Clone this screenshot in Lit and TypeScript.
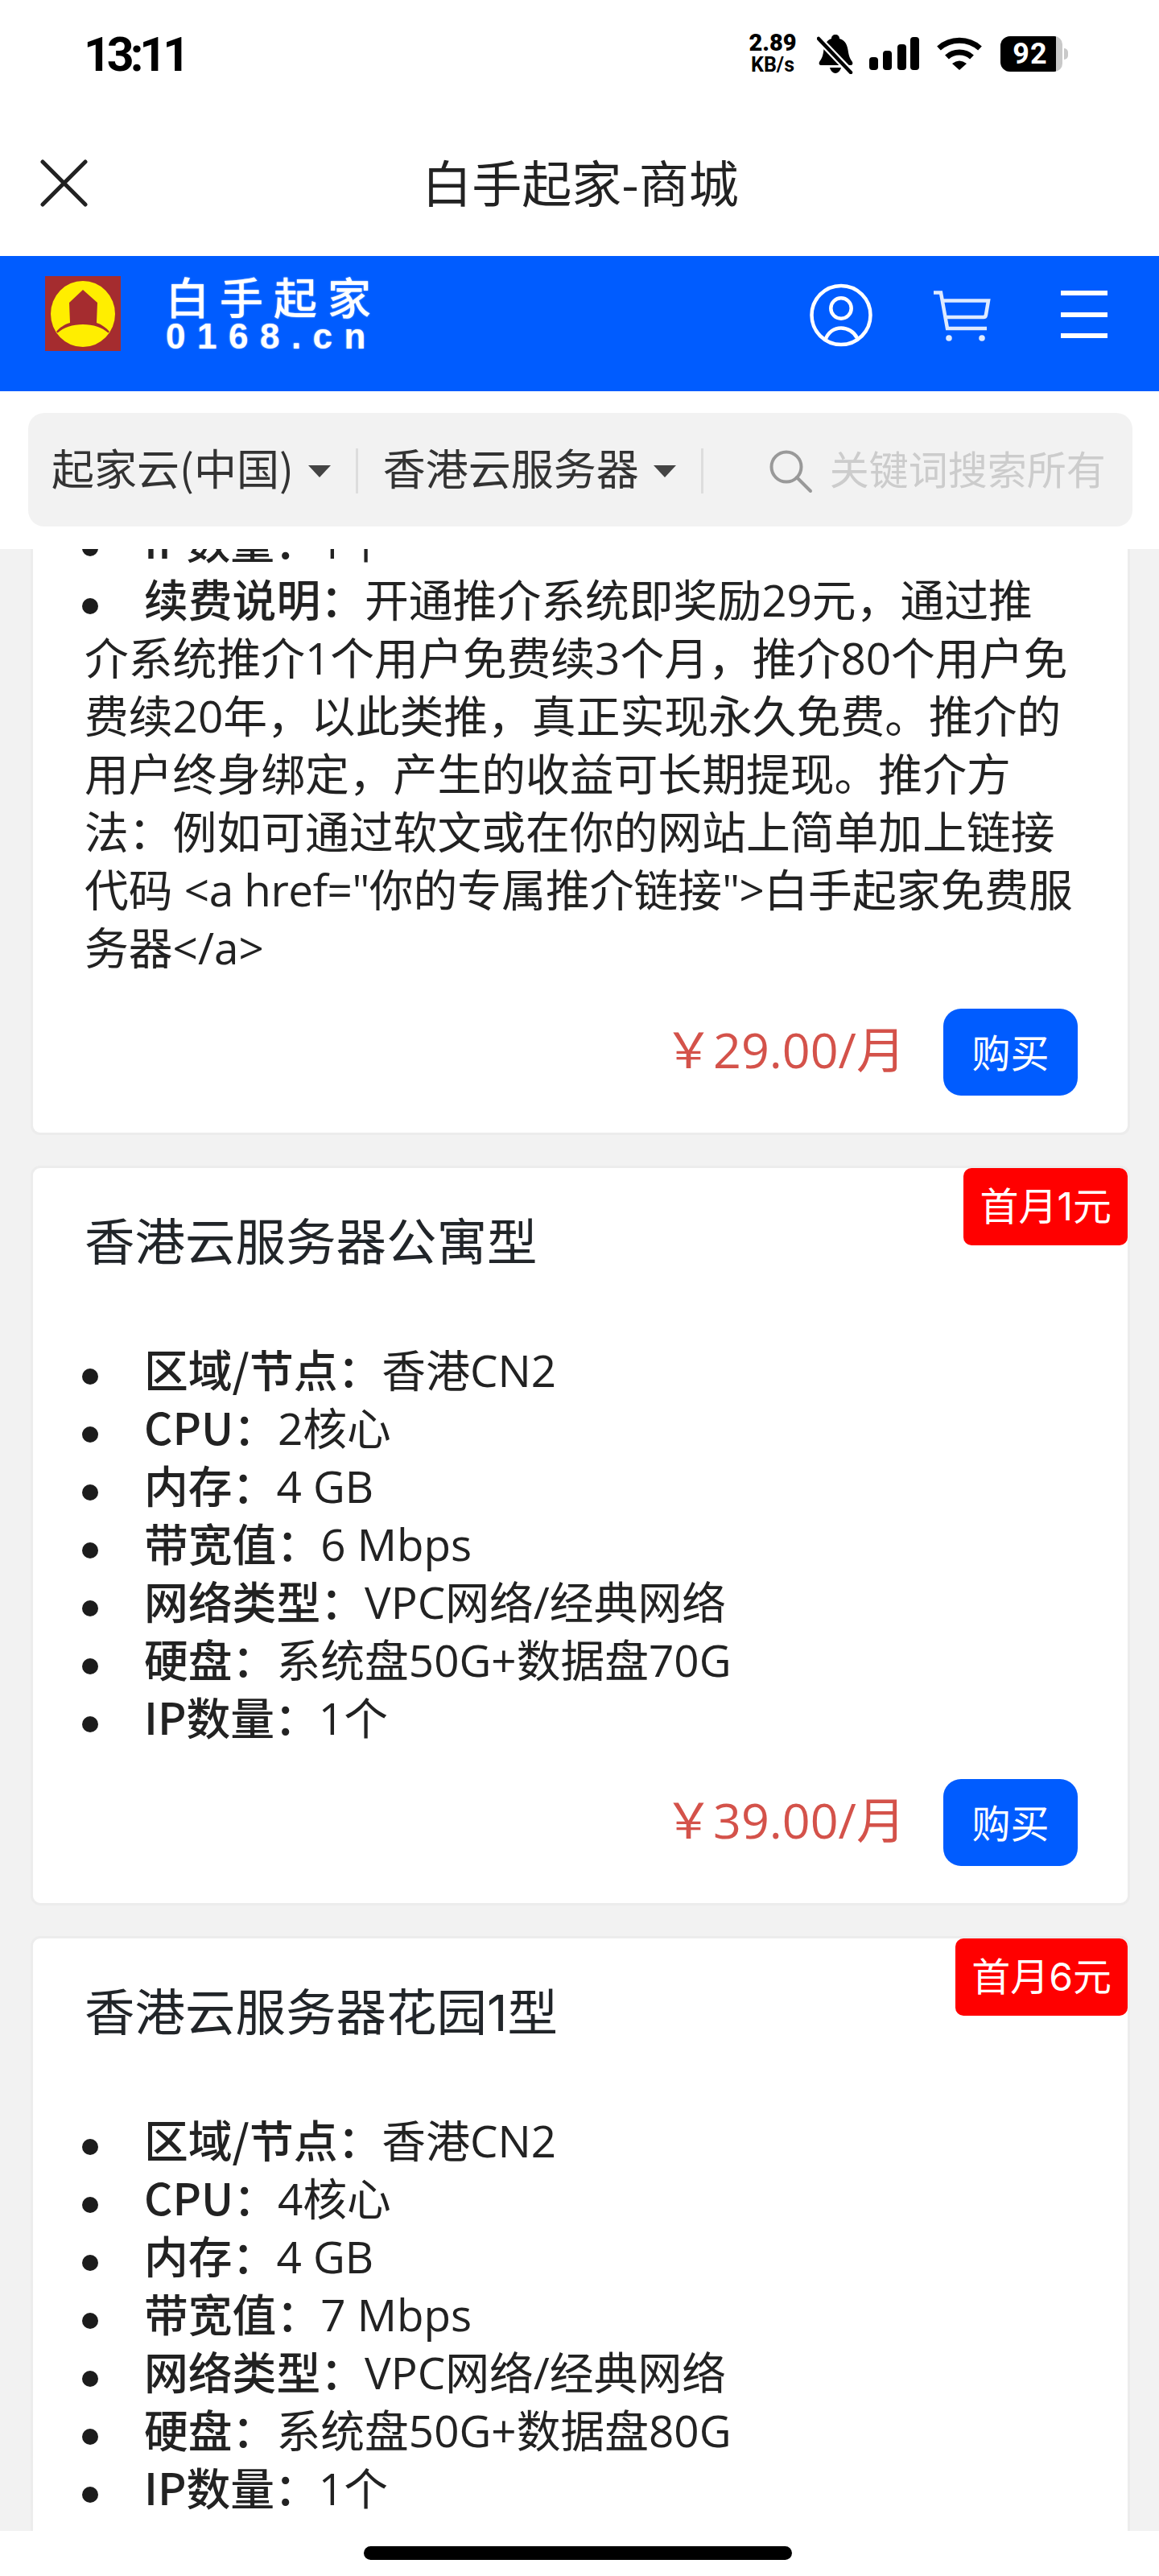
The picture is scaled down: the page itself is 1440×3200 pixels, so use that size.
import { LitElement, html, css } from "lit";
import { customElement } from "lit/decorators.js";

type Spec = [string, string];
const plan = (core: string, ram: string, bw: string, disk: string): Spec[] => [
  ["区域/节点：", "香港CN2"],
  ["CPU：", core],
  ["内存：", ram],
  ["带宽值：", bw],
  ["网络类型：", "VPC网络/经典网络"],
  ["硬盘：", disk],
  ["IP数量：", "1个"],
];

@customElement("app-root")
export class AppRoot extends LitElement {
  static styles = css`
    :host {
      display: block;
      width: 1440px;
      height: 3200px;
      background: #fff;
      font-family: "Noto Sans CJK SC", "Noto Sans", sans-serif;
      color: #222;
      overflow: hidden;
    }
    svg { display: block; flex: none; }
    .status {
      height: 134px;
      padding: 0 113px 22px 104px;
      display: flex;
      align-items: center;
      font-family: Roboto, sans-serif;
      color: #000;
    }
    .time { font-size: 59px; font-weight: 700; letter-spacing: -5px; flex: 1; }
    .speed { width: 60px; text-align: center; font-weight: 700; line-height: 28px; margin-right: 25px; font-size: 25px; }
    .speed b { display: block; font-size: 29px; }
    .bell { margin-right: 19px; }
    .signal { margin-right: 22px; }
    .wifi { margin-right: 23px; }
    .batt { display: flex; align-items: center; }
    .batt-body { width: 77px; height: 44px; border-radius: 12px 10px 10px 12px; background: #c9c9c9; overflow: hidden; }
    .batt-fill { width: 69px; height: 44px; background: #000; color: #fff; font-size: 36px; font-weight: 700; letter-spacing: 1px; line-height: 44px; text-align: center; padding-left: 5px; box-sizing: border-box; }
    .batt-nub { width: 5px; height: 14px; margin-left: 2px; background: #c9c9c9; border-radius: 0 5px 5px 0; }
    .titlebar {
      height: 162px;
      box-sizing: border-box;
      padding: 0 48px 18px 50px;
      display: grid;
      grid-template-columns: 1fr auto 1fr;
      align-items: center;
    }
    .titlebar h1 { margin: 0 0 6px; font-size: 62px; font-weight: 400; line-height: 84px; color: #222; }
    .brand {
      height: 168px;
      box-sizing: border-box;
      background: #005cff;
      padding: 25px 55px 0 56px;
      display: flex;
      align-items: flex-start;
    }
    .wordmark { margin-left: 56px; flex: 1; color: #fff; margin-top: -4px; text-shadow: 0 0 2px rgba(255, 255, 255, 0.7); }
    .wordmark b { display: block; font-size: 54px; line-height: 58px; letter-spacing: 13px; font-weight: 500; white-space: nowrap; }
    .wordmark span { display: block; font-family: "Liberation Sans", sans-serif; font-weight: 700; font-size: 44px; line-height: 42px; letter-spacing: 14.5px; white-space: nowrap; }
    .brand-icons { display: flex; gap: 70px; margin-top: 9px; }
    .searchwrap { height: 196px; box-sizing: border-box; padding: 27px 33px 28px 35px; }
    .search {
      height: 141px;
      box-sizing: border-box;
      border-radius: 20px;
      background: #f2f2f2;
      display: flex;
      align-items: center;
      padding-left: 29px;
      color: #333;
      font-size: 53px;
      padding-bottom: 2px;
    }
    .sel { white-space: nowrap; line-height: 72px; margin-bottom: 5px; }
    .tri { width: 0; height: 0; border: 14px solid transparent; border-top: 15px solid #444; border-bottom: 0; margin-left: 18px; margin-top: 6px; flex: none; }
    .div { width: 3px; height: 56px; background: #ddd; margin: 4px 31px 0 31px; flex: none; }
    .q { margin-left: 51px; margin-top: 6px; }
    .ph { font-size: 49px; color: #ccc; margin: 0 0 5px 21px; white-space: nowrap; }
    .view { height: 2462px; overflow: hidden; background: #f2f2f2; padding: 0 36px 0 38px; }
    .card {
      position: relative;
      background: #fff;
      border: 3px solid #ececec;
      border-radius: 12px;
      padding: 0 55px 0 64px;
      margin-bottom: 38px;
    }
    .card.first { margin-top: -48px; border-top-color: transparent; }
    .card-title { margin: 0; padding-top: 47px; font-family: Inter, "Noto Sans CJK SC", sans-serif; font-size: 62.5px; line-height: 90px; font-weight: 400; color: #212529; }
    .list { list-style: none; margin: 0; padding: 78px 0 0; font-family: "Open Sans", "Noto Sans CJK SC", sans-serif; font-size: 54.8px; line-height: 72px; color: #222; }
    .first .list { padding-top: 0; }
    .list li::before {
      content: "";
      display: inline-block;
      width: 20px;
      height: 20px;
      border-radius: 50%;
      background: #1c1c1c;
      margin: 0 57px 0 -3px;
      vertical-align: 3px;
    }
    .list b { font-family: "Noto Sans CJK SC", sans-serif; font-weight: 500; line-height: 1; }
    .code { letter-spacing: -0.5px; }
    .buy { display: flex; justify-content: flex-end; align-items: center; padding: 40px 7px 46px 0; }
    .price { font-family: "Open Sans", "Noto Sans CJK SC", sans-serif; font-size: 61px; line-height: 84px; color: #d4524a; margin: 0 47px 6px 0; white-space: nowrap; }
    .btn { width: 167px; height: 108px; border-radius: 22px; background: #005cff; color: #fff; font-size: 48px; display: flex; align-items: center; justify-content: center; padding-bottom: 4px; box-sizing: border-box; }
    .badge { position: absolute; right: 0; top: 0; height: 96px; padding: 0 20px; background: #f00; color: #fff; font-family: Inter, "Noto Sans CJK SC", sans-serif; font-size: 48px; line-height: 96px; border-radius: 10px; }
    .homebar { height: 56px; display: flex; justify-content: center; padding-top: 19px; box-sizing: border-box; }
    .homebar i { display: block; width: 532px; height: 17px; background: #000; border-radius: 9px; margin-left: -4px; }
  `;

  private spec(list: Spec[]) {
    return html`<ul class="list">${list.map(([k, v]) => html`<li><b>${k}</b>${v}</li>`)}</ul>`;
  }

  private foot(price: string) {
    return html`<div class="buy"><span class="price">${price}</span><div class="btn">购买</div></div>`;
  }

  render() {
    return html`
      <div class="status">
        <div class="time">13:11</div>
        <div class="speed"><b>2.89</b>KB/s</div>
        <svg class="bell" width="46" height="50" viewBox="0 0 46 50">
          <path d="M23 1c3 0 5 2 5 5 8 2 10 9 11 17 1 6 3 9 5 12 1 2 0 4-2 4H5c-2 0-3-2-2-4 2-3 4-6 5-12 1-8 3-15 10-17 0-3 2-5 5-5zM16 42h14c-1 4-4 7-7 7s-6-3-7-7z" fill="#000"/>
          <path d="M0 4 44 50" stroke="#fff" stroke-width="9"/>
          <path d="M2 6 42 48" stroke="#000" stroke-width="4.5" stroke-linecap="round"/>
        </svg>
        <svg class="signal" width="62" height="42" viewBox="0 0 62 42" fill="#000">
          <rect x="0" y="25" width="11" height="16" rx="4"/><rect x="17" y="17" width="11" height="24" rx="4"/>
          <rect x="35" y="9" width="11" height="32" rx="4"/><rect x="51" y="0" width="11" height="41" rx="4"/>
        </svg>
        <svg class="wifi" width="56" height="42" viewBox="0 0 56 42">
          <g fill="none" stroke="#000" stroke-width="7"><path d="M2.500 14C17 1 39 1 53.500 14"/><path d="M12.500 25C21 17 35 17 43.500 25"/></g>
          <path d="M19 33Q28 26 37 33L28 41Z" fill="#000"/>
        </svg>
        <div class="batt"><div class="batt-body"><div class="batt-fill">92</div></div><div class="batt-nub"></div></div>
      </div>
      <div class="titlebar">
        <svg width="60" height="60" viewBox="0 0 60 60"><path d="M3 3 56 56M56 3 3 56" stroke="#222" stroke-width="5" stroke-linecap="round"/></svg>
        <h1>白手起家-商城</h1>
        <span></span>
      </div>
      <div class="brand">
        <svg width="94" height="93" viewBox="0 0 94 93">
          <rect width="94" height="93" fill="#a52c2f"/>
          <ellipse cx="47" cy="47" rx="40" ry="41" fill="#ffee00"/>
          <path d="M47 17 65 33 64 58C70 60 76 64 80 69L78.500 70.500C71 64 60 60 47 60S23 64 15.500 70.500L14 69C18 64 24 60 31 58L30 33Z" fill="#a52c2f"/>
        </svg>
        <div class="wordmark"><b>白手起家</b><span>0168.cn</span></div>
        <div class="brand-icons">
          <svg width="80" height="80" viewBox="0 0 80 80" fill="none" stroke="#fff" stroke-width="4.500">
            <circle cx="40" cy="39.500" r="36.500"/><circle cx="40" cy="31" r="12.700"/>
            <path d="M20 71C24 60 32 55.500 40 55.500S56 60 60 68"/>
          </svg>
          <svg width="80" height="80" viewBox="0 0 80 80" fill="none" stroke="#deeaff" stroke-width="4.500">
            <path d="M5 11.500H14L22 56H71"/><path d="M16 21.500H73L70 39Q69.500 42 67 42H19"/>
            <circle cx="24" cy="68" r="3.800" fill="#deeaff" stroke="none"/><circle cx="65" cy="68" r="3.800" fill="#deeaff" stroke="none"/>
          </svg>
          <svg width="80" height="80" viewBox="0 0 80 80" fill="#fff">
            <rect x="13" y="9" width="58" height="6"/><rect x="13" y="36" width="58" height="6"/><rect x="13" y="62" width="58" height="6"/>
          </svg>
        </div>
      </div>
      <div class="searchwrap">
        <div class="search">
          <span class="sel">起家云(中国)</span><i class="tri"></i><i class="div"></i>
          <span class="sel">香港云服务器</span><i class="tri"></i><i class="div"></i>
          <svg class="q" width="54" height="54" viewBox="0 0 54 54" fill="none" stroke="#999" stroke-width="4">
            <circle cx="21" cy="21" r="18.500"/><path d="M34 34 51 51" stroke-linecap="round"/>
          </svg>
          <span class="ph">关键词搜索所有</span>
        </div>
      </div>
      <div class="view">
        <div class="card first">
          <ul class="list">
            <li><b>IP数量：</b>1个</li>
            <li><b>续费说明：</b>开通推介系统即奖励29元，通过推<br />介系统推介1个用户免费续3个月，推介80个用户免费续20年，以此类推，真正实现永久免费。推介的用户终身绑定，产生的收益可长期提现。推介方法：例如可通过软文或在你的网站上简单加上链接代码 <span class="code">&lt;a href="</span>你的专属推介链接<span class="code">"&gt;</span>白手起家免费服务器&lt;/a&gt;</li>
          </ul>
          ${this.foot("￥29.00/月")}
        </div>
        <div class="card">
          <div class="badge">首月1元</div>
          <h2 class="card-title">香港云服务器公寓型</h2>
          ${this.spec(plan("2核心", "4 GB", "6 Mbps", "系统盘50G+数据盘70G"))}
          ${this.foot("￥39.00/月")}
        </div>
        <div class="card">
          <div class="badge">首月6元</div>
          <h2 class="card-title">香港云服务器花园1型</h2>
          ${this.spec(plan("4核心", "4 GB", "7 Mbps", "系统盘50G+数据盘80G"))}
          ${this.foot("￥49.00/月")}
        </div>
      </div>
      <div class="homebar"><i></i></div>
    `;
  }
}
